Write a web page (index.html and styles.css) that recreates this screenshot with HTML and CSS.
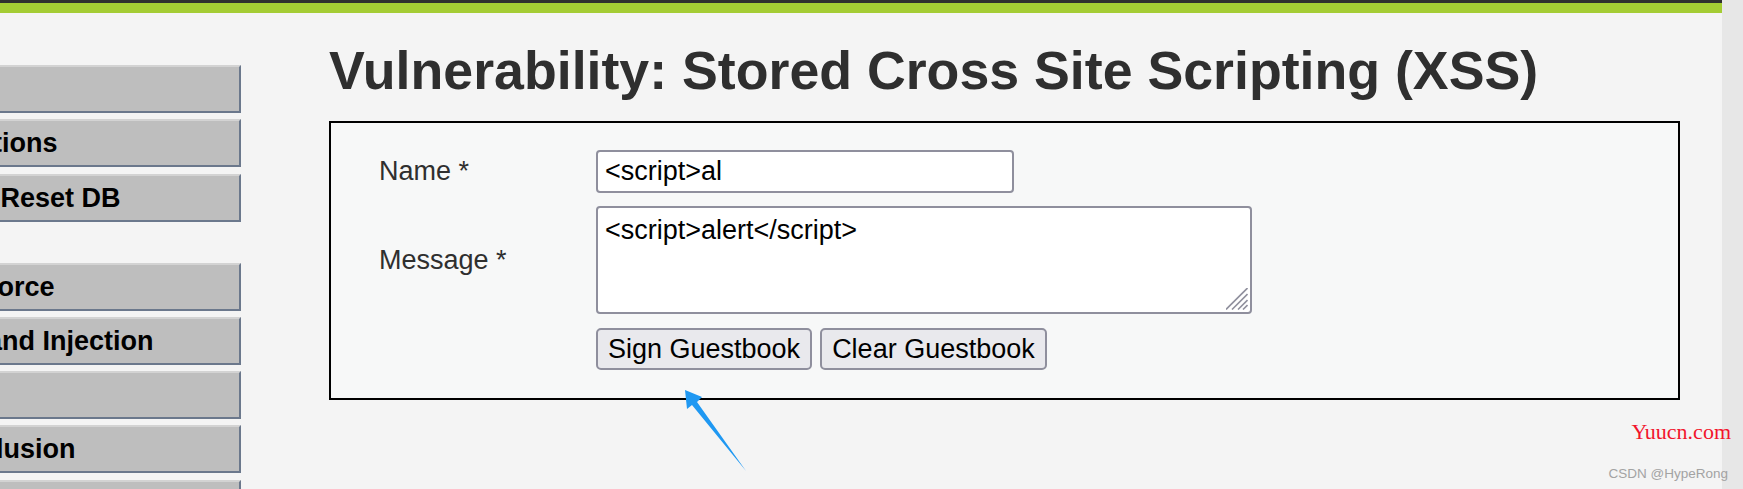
FILE: index.html
```html
<!DOCTYPE html>
<html lang="en">
<head>
    <meta charset="UTF-8">
    <meta name="viewport" content="width=device-width, initial-scale=1.0">
    <title>Vulnerability: Stored Cross Site Scripting (XSS)</title>
    <link rel="stylesheet" href="styles.css">
</head>
<body>

    <div class="screen">
        <div class="page">
            <div class="topbar"></div>

            <div class="layout">
                <nav class="menu">
                    <ul class="menu-block">
                        <li><a href="#">Home</a></li>
                        <li><a href="#">Instructions</a></li>
                        <li><a href="#">Setup / Reset DB</a></li>
                    </ul>
                    <ul class="menu-block">
                        <li><a href="#">Brute Force</a></li>
                        <li><a href="#">Command Injection</a></li>
                        <li><a href="#">CSRF</a></li>
                        <li><a href="#">File Inclusion</a></li>
                        <li><a href="#">File Upload</a></li>
                    </ul>
                </nav>

                <main class="content">
                    <h1>Vulnerability: Stored Cross Site Scripting (XSS)</h1>

                    <div class="code-area">
                        <form class="guestbook" onsubmit="return false;">
                            <label for="txtName">Name *</label>
                            <input type="text" id="txtName" value="<script>al" />

                            <label for="mtxMessage">Message *</label>
                            <div class="textarea-wrap">
                                <textarea id="mtxMessage"><script>alert</script></textarea>
                                <svg class="grip" width="22" height="22" viewBox="0 0 22 22">
                                    <line x1="0" y1="21.5" x2="21.5" y2="0" />
                                    <line x1="6" y1="21.5" x2="21.5" y2="6" />
                                    <line x1="12" y1="21.5" x2="21.5" y2="12" />
                                    <line x1="17" y1="21.5" x2="21.5" y2="17" />
                                </svg>
                            </div>

                            <span></span>
                            <div class="actions">
                                <button type="button">Sign Guestbook</button>
                                <button type="button">Clear Guestbook</button>
                            </div>
                        </form>
                    </div>
                </main>
            </div>
        </div>
        <div class="scrollbar"></div>

        <!-- annotation arrow and watermarks sit on top of the page -->
        <svg class="arrow" width="70" height="90" viewBox="0 0 70 90">
            <polygon points="5,5 22,12 17,17 66,86 12,20 7,24" />
        </svg>
        <div class="mark-site">Yuucn.com</div>
        <div class="mark-csdn">CSDN @HypeRong</div>
    </div>

</body>
</html>
```

FILE: styles.css
```css
html, body {
    margin: 0;
    padding: 0;
    overflow: hidden;
}

body {
    background-color: #f4f4f4;
    color: #2f2f2f;
    font-family: "Liberation Sans", Arial, sans-serif;
}

.screen {
    position: relative;
    display: flex;
    height: 489px;
    overflow: hidden;
}

.page {
    flex: 1;
    min-width: 0;
    background-color: #f4f4f4;
}

.scrollbar {
    width: 21px;
    background-color: #e7e7e7;
}

.topbar {
    height: 3px;
    background-color: #2f2f2f;
    border-bottom: 10px solid #a4cc34;
}

.layout {
    display: flex;
    align-items: flex-start;
}

/* left menu, its left part runs off the screen */
.menu {
    width: 361px;
    margin-left: -120px;
    padding-top: 52px;
    flex-shrink: 0;
}

.menu-block {
    list-style: none;
    margin: 0 0 41px 0;
    padding: 0;
}

.menu-block li a {
    display: block;
    box-sizing: border-box;
    height: 48px;
    margin-bottom: 6.25px;
    padding-left: 23px;
    line-height: 44px;
    background-color: #bebebe;
    border-top: 2px solid #d3d3d3;
    border-bottom: 2px solid #6b788c;
    border-right: 2px solid #6b788c;
    color: #000;
    font-weight: bold;
    font-size: 27px;
    text-decoration: none;
    white-space: nowrap;
}

.content {
    margin-left: 88px;
}

h1 {
    margin: 25.5px 0 20.5px 0;
    font-size: 53.7px;
    line-height: 62px;
    font-weight: bold;
    color: #2f2f2f;
    white-space: nowrap;
}

.code-area {
    box-sizing: border-box;
    width: 1351px;
    background-color: #f7f8f8;
    border: 2px solid #000;
    padding: 27px 0 28px 48px;
}

.guestbook {
    display: grid;
    grid-template-columns: 217px auto;
    justify-content: start;
    align-items: center;
    row-gap: 13px;
}

.guestbook label {
    font-size: 27px;
    color: #2f2f2f;
}

.guestbook input,
.guestbook textarea,
.guestbook button {
    font-family: "Liberation Sans", Arial, sans-serif;
    font-size: 27px;
    color: #000;
}

.guestbook input {
    box-sizing: border-box;
    width: 418px;
    height: 43px;
    margin: 0;
    padding: 0 7px;
    border: 2px solid #8f8f9d;
    border-radius: 4px;
    background-color: #fff;
}

.textarea-wrap {
    position: relative;
    width: 656px;
    height: 108px;
}

.guestbook textarea {
    display: block;
    box-sizing: border-box;
    width: 656px;
    height: 108px;
    margin: 0;
    padding: 7px 7px 1px 7px;
    border: 2px solid #8f8f9d;
    border-radius: 4px;
    background-color: #fff;
    resize: none;
    overflow: hidden;
    line-height: normal;
}

.grip {
    position: absolute;
    right: 4px;
    bottom: 4px;
}

.grip line {
    stroke: #8f8f9d;
    stroke-width: 1.6;
}

.actions {
    display: flex;
    gap: 8px;
    margin-top: 1px;
}

.guestbook button {
    box-sizing: border-box;
    height: 42px;
    margin: 0;
    padding: 0 10px;
    border: 2px solid #8f8f9d;
    border-radius: 5px;
    background-color: #e9e9ed;
}

.arrow {
    position: absolute;
    left: 680px;
    top: 385px;
}

.arrow polygon {
    fill: #1f98f2;
}

.mark-site {
    position: absolute;
    right: 12px;
    top: 421px;
    font-family: "Liberation Serif", "Times New Roman", serif;
    font-size: 22px;
    line-height: 22px;
    color: #f2142c;
}

.mark-csdn {
    position: absolute;
    right: 15px;
    top: 467px;
    font-size: 13.5px;
    line-height: 13.5px;
    color: #a3a3a3;
}
```
